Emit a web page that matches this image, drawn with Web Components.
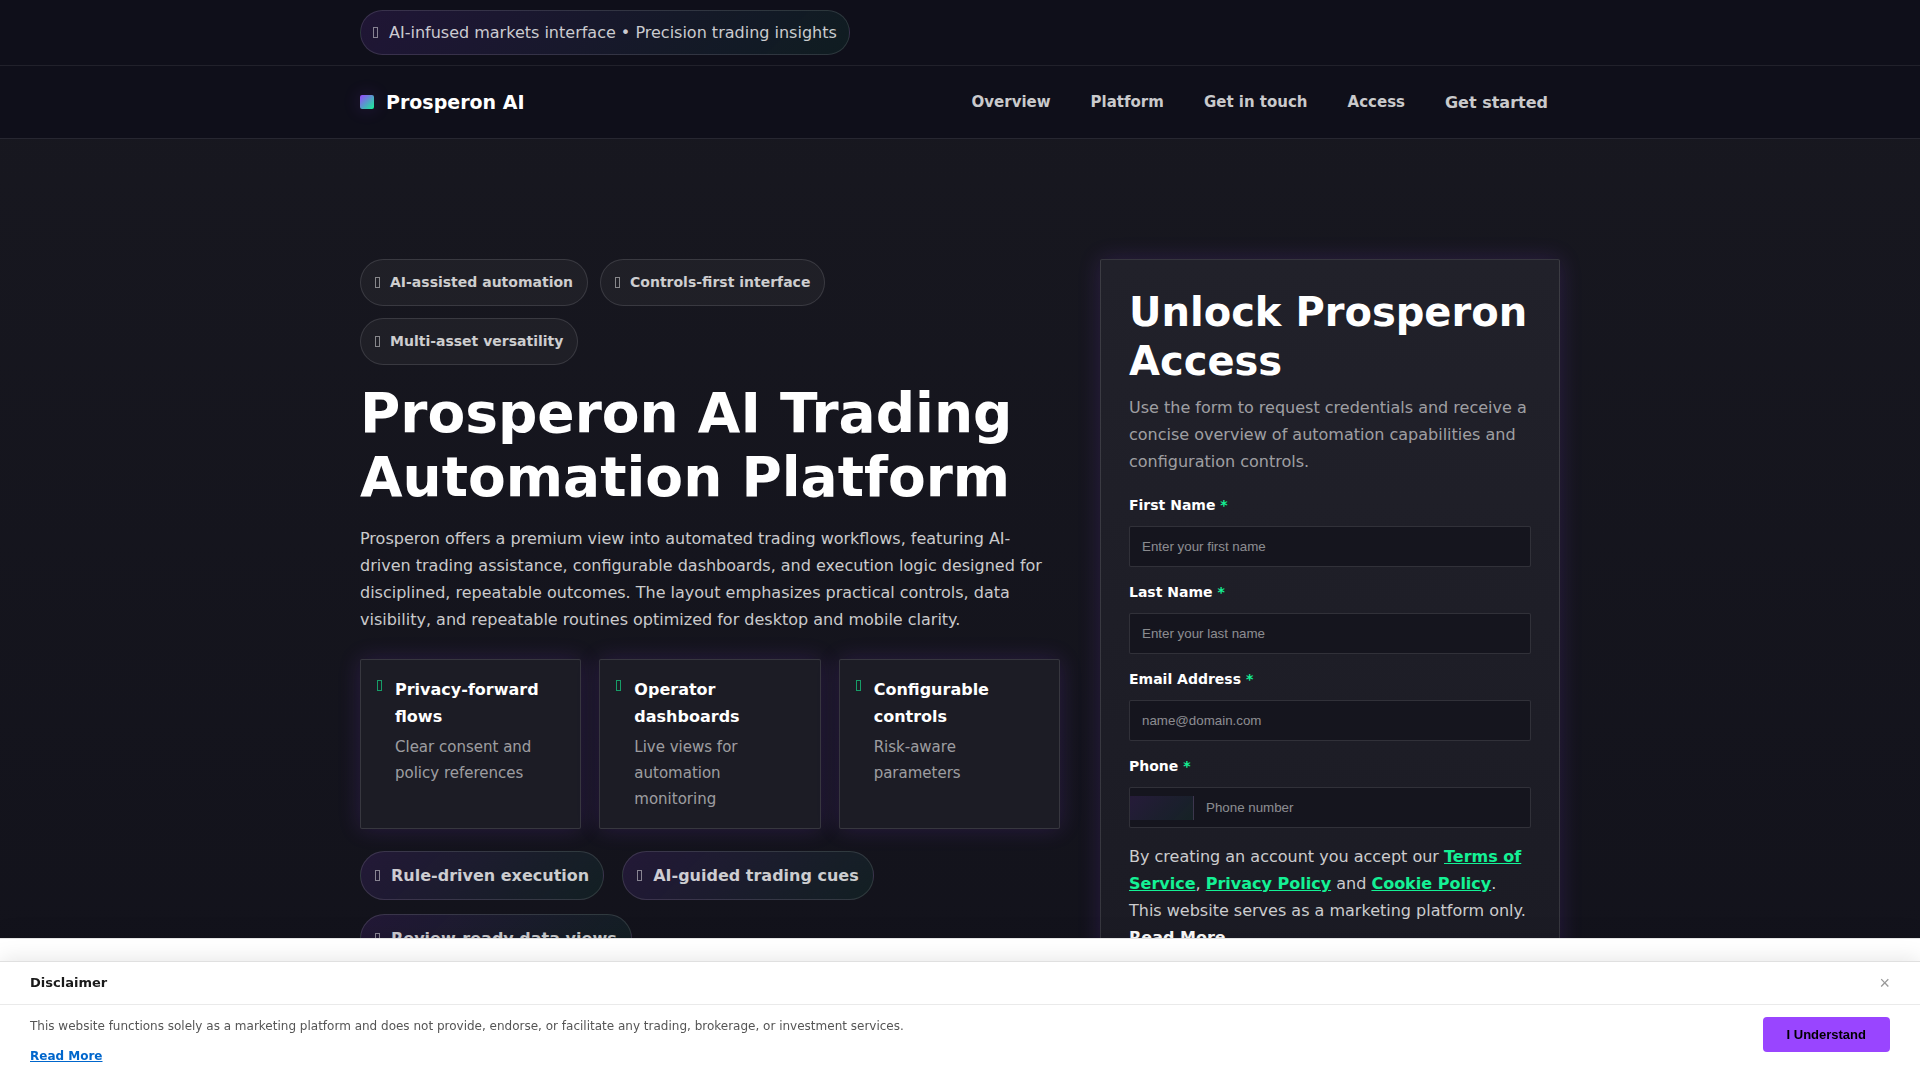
<!DOCTYPE html>
<html lang="en">
<head>
<meta charset="utf-8">
<meta name="viewport" content="width=device-width, initial-scale=1">
<title>Prosperon AI</title>
<style>
  :root{
    --violet:#9945ff;
    --mint:#14f195;
    --line:rgba(255,255,255,0.12);
    --text:rgba(255,255,255,0.78);
    --muted:rgba(255,255,255,0.58);
    --tint:linear-gradient(135deg,rgba(153,69,255,0.12),rgba(20,241,149,0.06));
    --glow:0 0 22px rgba(153,69,255,0.17);
  }
  *{box-sizing:border-box}
  body{margin:0;min-height:100vh;background:linear-gradient(180deg,#181820,#12121b) #12121b;color:var(--text);font-family:"DejaVu Sans",sans-serif;font-size:16px;line-height:27px}
</style>
</head>
<body>
<prosperon-topbar>
  <prosperon-chip size="slim" tinted>AI-infused markets interface • Precision trading insights</prosperon-chip>
</prosperon-topbar>
<prosperon-nav></prosperon-nav>
<prosperon-hero>
  <prosperon-chip slot="badges" size="small">AI-assisted automation</prosperon-chip>
  <prosperon-chip slot="badges" size="small">Controls-first interface</prosperon-chip>
  <prosperon-chip slot="badges" size="small">Multi-asset versatility</prosperon-chip>

  <prosperon-feature slot="features" heading="Privacy-forward flows">Clear consent and policy references</prosperon-feature>
  <prosperon-feature slot="features" heading="Operator dashboards">Live views for automation monitoring</prosperon-feature>
  <prosperon-feature slot="features" heading="Configurable controls">Risk-aware parameters</prosperon-feature>

  <prosperon-chip slot="cues" tinted>Rule-driven execution</prosperon-chip>
  <prosperon-chip slot="cues" tinted>AI-guided trading cues</prosperon-chip>
  <prosperon-chip slot="cues" tinted>Review-ready data views</prosperon-chip>

  <prosperon-signup slot="form"></prosperon-signup>
</prosperon-hero>
<prosperon-disclaimer></prosperon-disclaimer>

<script>
/* Small base: every element only provides its markup */
class ProsperonElement extends HTMLElement {
  constructor() {
    super();
    this.attachShadow({ mode: 'open' });
  }

  connectedCallback() {
    this.shadowRoot.innerHTML = `<style>*{box-sizing:border-box}</style>` + this.template();
  }
}

/* Strip above the navigation */
class ProsperonTopbar extends ProsperonElement {
  template() {
    return `
    <style>
      :host{display:block;background:#0f0f1a;border-bottom:1px solid rgba(255,255,255,0.08)}
      .inner{display:flex;max-width:1240px;margin:0 auto;padding:10px 20px}
    </style>
    <div class="inner"><slot></slot></div>`;
  }
}

/* Rounded label with a narrow outline icon */
class ProsperonChip extends ProsperonElement {
  template() {
    return `
    <style>
      :host{display:inline-flex;align-items:center;gap:11px;padding:10px 14px;border:1px solid var(--line);border-radius:999px;background:rgba(255,255,255,0.04);font-weight:700}
      :host([tinted]){background:var(--tint)}
      :host([size="small"]){gap:10px;font-size:14px;line-height:25px}
      :host([size="slim"]){padding:8px 12px;font-weight:400}
      .icon{width:5px;height:11px;border:1px solid currentColor;opacity:0.6}
    </style>
    <span class="icon" aria-hidden="true"></span>
    <span><slot></slot></span>`;
  }
}

class ProsperonNav extends ProsperonElement {
  template() {
    return `
    <style>
      :host{display:block;background:#0f0f1a;border-bottom:1px solid rgba(255,255,255,0.1)}
      .inner{display:flex;align-items:center;justify-content:space-between;max-width:1240px;min-height:72px;margin:0 auto;padding:0 20px}
      a{color:inherit;text-decoration:none}
      .brand{display:flex;align-items:center;gap:12px;color:#fff;font-size:19px;font-weight:700}
      .mark{width:14px;height:14px;border-radius:2px;background:linear-gradient(135deg,var(--violet),var(--mint));box-shadow:0 0 18px rgba(153,69,255,0.2)}
      nav{display:flex;gap:16px;font-size:15px;font-weight:700}
      nav a{padding:6px 12px}
      nav .start{font-size:16px}
    </style>
    <div class="inner">
      <a class="brand" href="#"><span class="mark"></span>Prosperon AI</a>
      <nav>
        <a href="#overview">Overview</a>
        <a href="#platform">Platform</a>
        <a href="#contact">Get in touch</a>
        <a href="#access">Access</a>
        <a class="start" href="#start">Get started</a>
      </nav>
    </div>`;
  }
}

class ProsperonHero extends ProsperonElement {
  template() {
    return `
    <style>
      :host{display:block}
      .inner{display:grid;grid-template-columns:minmax(0,1fr) 460px;gap:40px;max-width:1240px;margin:0 auto;padding:120px 20px 60px}
      .badges{display:flex;flex-wrap:wrap;gap:12px;max-width:600px}
      h1{margin:16px 0;color:#fff;font-size:55px;line-height:64px;font-weight:700}
      p{margin:0}
      .features{display:grid;grid-template-columns:repeat(3,minmax(0,1fr));gap:18px;margin:26px 0 22px}
      .cues{display:flex;flex-wrap:wrap;gap:14px 18px}
      @media(max-width:1000px){.inner{grid-template-columns:minmax(0,1fr)}}
      @media(max-width:640px){.features{grid-template-columns:minmax(0,1fr)}h1{font-size:36px;line-height:44px}}
    </style>
    <section class="inner">
      <div>
        <div class="badges"><slot name="badges"></slot></div>
        <h1>Prosperon AI Trading Automation Platform</h1>
        <p>Prosperon offers a premium view into automated trading workflows, featuring AI-driven trading assistance, configurable dashboards, and execution logic designed for disciplined, repeatable outcomes. The layout emphasizes practical controls, data visibility, and repeatable routines optimized for desktop and mobile clarity.</p>
        <div class="features"><slot name="features"></slot></div>
        <div class="cues"><slot name="cues"></slot></div>
      </div>
      <slot name="form"></slot>
    </section>`;
  }
}

class ProsperonFeature extends ProsperonElement {
  template() {
    return `
    <style>
      :host{display:flex;align-items:flex-start;gap:13px;padding:16px;border:1px solid var(--line);border-radius:2px;background:#1c1c25;box-shadow:var(--glow)}
      .icon{flex:none;width:5px;height:11px;margin-top:4px;border:1px solid var(--mint);opacity:0.6}
      strong{display:block;color:#fff}
      .desc{margin-top:4px;color:var(--muted);font-size:15px;line-height:26px}
    </style>
    <span class="icon" aria-hidden="true"></span>
    <div>
      <strong>${this.getAttribute('heading')}</strong>
      <div class="desc"><slot></slot></div>
    </div>`;
  }
}

/* Label + text box. The "prefix" attribute adds the dial code cell */
class ProsperonField extends ProsperonElement {
  template() {
    const prefix = this.hasAttribute('prefix') ? '<span class="prefix"></span>' : '';
    return `
    <style>
      :host{display:block}
      label{display:block;margin-bottom:8px;color:#fff;font-size:14px;line-height:25px;font-weight:700}
      label span{color:var(--mint)}
      .box{display:flex;align-items:center;height:41px;border:1px solid var(--line);border-radius:2px;background:#15151e}
      .box:focus-within{border-color:var(--violet)}
      .prefix{flex:none;width:64px;height:24px;border-right:1px solid var(--line);background:var(--tint)}
      input{flex:1;min-width:0;height:100%;padding:0 12px;border:0;outline:0;background:none;color:#fff;font-family:"Liberation Sans",Arial,sans-serif}
      input::placeholder{color:rgba(255,255,255,0.52)}
    </style>
    <label for="input">${this.getAttribute('label')} <span>*</span></label>
    <div class="box">${prefix}<input id="input" type="${this.getAttribute('type') || 'text'}" placeholder="${this.getAttribute('placeholder')}" required></div>`;
  }
}

class ProsperonSignup extends ProsperonElement {
  template() {
    return `
    <style>
      :host{display:block;padding:28px;border:1px solid var(--line);border-radius:2px;background:linear-gradient(180deg,#21212a,#1b1b24);box-shadow:var(--glow)}
      h2{margin:0 0 8px;color:#fff;font-size:40px;line-height:49px;font-weight:700}
      p{margin:0}
      .intro{margin-bottom:18px;color:var(--muted)}
      form{display:flex;flex-direction:column;gap:13px}
      .terms{margin-top:2px}
      a{color:var(--mint);font-weight:700}
      a.more{color:#fff;text-decoration:none}
    </style>
    <h2>Unlock Prosperon Access</h2>
    <p class="intro">Use the form to request credentials and receive a concise overview of automation capabilities and configuration controls.</p>
    <form>
      <prosperon-field label="First Name" placeholder="Enter your first name"></prosperon-field>
      <prosperon-field label="Last Name" placeholder="Enter your last name"></prosperon-field>
      <prosperon-field label="Email Address" type="email" placeholder="name@domain.com"></prosperon-field>
      <prosperon-field label="Phone" type="tel" placeholder="Phone number" prefix></prosperon-field>
      <p class="terms">By creating an account you accept our <a href="#terms">Terms of Service</a>, <a href="#privacy">Privacy Policy</a> and <a href="#cookies">Cookie Policy</a>. This website serves as a marketing platform only. <a class="more" href="#more">Read More</a></p>
    </form>`;
  }
}

/* Notice pinned to the bottom of the window */
class ProsperonDisclaimer extends ProsperonElement {
  template() {
    return `
    <style>
      :host{display:block;position:fixed;left:0;right:0;bottom:0;padding-top:22px;border-top:1px solid #e5e5e5;background:#fff;color:#555;font-size:12px;line-height:19px;box-shadow:0 -2px 20px rgba(0,0,0,0.1)}
      .panel{border-top:1px solid #e0e0e0;background:#fff;box-shadow:0 -2px 20px rgba(0,0,0,0.1)}
      header{display:flex;align-items:center;justify-content:space-between;padding:10px 30px;border-bottom:1px solid #eaeaea}
      h3{margin:0;color:#1a1a1a;font-size:13px;line-height:22px}
      .close{padding:0;border:0;background:none;color:#999;font:18px/22px "Liberation Sans",Arial,sans-serif;cursor:pointer}
      .body{display:flex;align-items:flex-start;justify-content:space-between;gap:30px;padding:12px 30px 14px}
      p{margin:0 0 11px}
      a{color:#0066cc;font-weight:700}
      .accept{flex:none;height:35px;padding:0 24px;border:0;border-radius:4px;background:var(--violet);color:#000;font:700 13px "Liberation Sans",Arial,sans-serif;cursor:pointer}
    </style>
    <div class="panel">
      <header>
        <h3>Disclaimer</h3>
        <button class="close" type="button" aria-label="Close">×</button>
      </header>
      <div class="body">
        <div>
          <p>This website functions solely as a marketing platform and does not provide, endorse, or facilitate any trading, brokerage, or investment services.</p>
          <a href="#more">Read More</a>
        </div>
        <button class="accept" type="button">I Understand</button>
      </div>
    </div>`;
  }

  connectedCallback() {
    super.connectedCallback();
    this.shadowRoot.querySelectorAll('button').forEach(btn => {
      btn.addEventListener('click', () => this.remove());
    });
  }
}

customElements.define('prosperon-topbar', ProsperonTopbar);
customElements.define('prosperon-chip', ProsperonChip);
customElements.define('prosperon-nav', ProsperonNav);
customElements.define('prosperon-hero', ProsperonHero);
customElements.define('prosperon-feature', ProsperonFeature);
customElements.define('prosperon-field', ProsperonField);
customElements.define('prosperon-signup', ProsperonSignup);
customElements.define('prosperon-disclaimer', ProsperonDisclaimer);
</script>
</body>
</html>
